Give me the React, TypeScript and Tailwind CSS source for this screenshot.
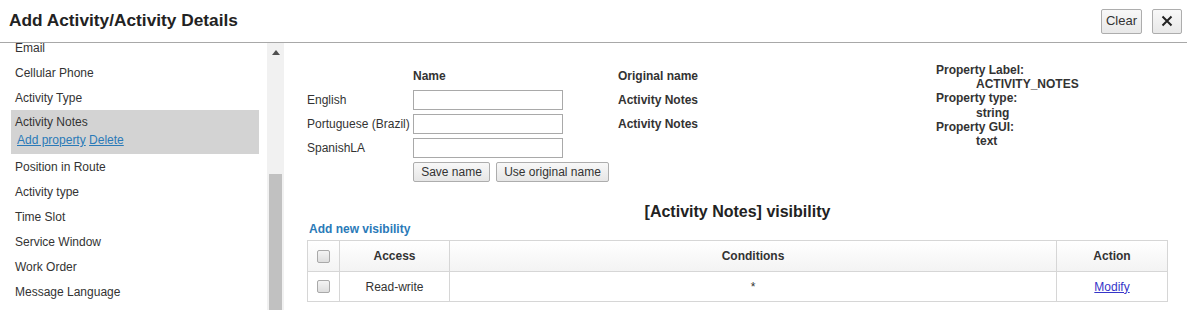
import React from "react";

const ITEMS_BEFORE = ["Email", "Cellular Phone", "Activity Type"];
const ITEMS_AFTER = ["Position in Route", "Activity type", "Time Slot", "Service Window", "Work Order", "Message Language"];
const LANGS = ["English", "Portuguese (Brazil)", "SpanishLA"];
const ORIGINAL: Record<string, string> = { English: "Activity Notes", "Portuguese (Brazil)": "Activity Notes" };

function Checkbox() {
  return <span className="block w-[13px] h-[13px] rounded-[2px] border border-[#a9a9a9] bg-gradient-to-b from-[#f4f4f4] to-[#dedede]" />;
}

export default function App() {
  return (
    <div className="w-[1187px] h-[310px] overflow-hidden bg-white text-[#333] font-['Liberation_Sans',Arial,sans-serif]">
      {/* Header */}
      <div className="h-[43px] flex items-center justify-between border-b border-[#a8a8a8] pl-[9px] pr-[5px]">
        <h1 className="text-[17.3px] font-bold text-[#222] mb-[1px]">Add Activity/Activity Details</h1>
        <div className="flex items-center gap-[10px]">
          <button className="h-[25px] px-[4px] text-[13px] text-[#333] border border-[#adadad] rounded-[2px] bg-gradient-to-b from-[#f8f8f8] to-[#e8e8e8]">Clear</button>
          <button className="h-[25px] w-[30px] flex items-center justify-center border border-[#adadad] rounded-[2px] bg-gradient-to-b from-[#f8f8f8] to-[#e8e8e8]">
            <svg width="12" height="12" viewBox="0 0 12 12"><path d="M1.5 1.5L10.5 10.5M10.5 1.5L1.5 10.5" stroke="#222" strokeWidth="2" /></svg>
          </button>
        </div>
      </div>

      <div className="flex h-[267px]">
        {/* Left list, scrolled a little */}
        <div className="w-[267px] overflow-hidden">
          <div className="mt-[-8px] pl-[11px] pr-[8px] text-[12px]">
            {ITEMS_BEFORE.map((it) => (
              <div key={it} className="h-[25px] flex items-center pl-[4px]">{it}</div>
            ))}
            <div className="h-[44px] bg-[#d3d3d3] pl-[4px] pt-[5px]">
              <div className="leading-[14px]">Activity Notes</div>
              <div className="mt-[4px] pl-[2px] leading-[14px] text-[#2a7ab8]">
                <a className="underline">Add property</a> <a className="underline">Delete</a>
              </div>
            </div>
            {ITEMS_AFTER.map((it) => (
              <div key={it} className="h-[25px] flex items-center pl-[4px]">{it}</div>
            ))}
          </div>
        </div>

        {/* Scrollbar */}
        <div className="w-[17px] bg-[#f1f1f1] flex flex-col items-center">
          <svg width="8" height="5" viewBox="0 0 8 5" className="mt-[7px]"><path d="M0 5L4 0L8 5Z" fill="#505050" /></svg>
          <div className="mt-[119px] w-[13px] flex-1 bg-[#c1c1c1]" />
        </div>

        {/* Right content */}
        <div className="flex-1 pl-[23px] pr-[19px]">
          <div className="flex">
            <div className="w-[629px] pt-[21px] grid grid-cols-[106px_205px_1fr] text-[12px] auto-rows-[24px] items-center">
              <div />
              <div className="font-bold">Name</div>
              <div className="font-bold">Original name</div>
              {LANGS.map((l) => (
                <React.Fragment key={l}>
                  <div>{l}</div>
                  <div><input className="block w-[150px] h-[20px] border border-[#a9a9a9] bg-white" /></div>
                  <div className="font-bold">{ORIGINAL[l] ?? ""}</div>
                </React.Fragment>
              ))}
              <div />
              <div className="col-span-2 flex gap-[6px]">
                <button className="h-[20px] w-[77px] text-[12px] border border-[#adadad] rounded-[2px] bg-gradient-to-b from-[#f8f8f8] to-[#e6e6e6]">Save name</button>
                <button className="h-[20px] w-[113px] text-[12px] border border-[#adadad] rounded-[2px] bg-gradient-to-b from-[#f8f8f8] to-[#e6e6e6]">Use original name</button>
              </div>
            </div>
            <div className="text-[12px] font-bold leading-[14.2px] pt-[20px]">
              <div>Property Label:</div>
              <div className="pl-[40px]">ACTIVITY_NOTES</div>
              <div>Property type:</div>
              <div className="pl-[40px]">string</div>
              <div>Property GUI:</div>
              <div className="pl-[40px]">text</div>
            </div>
          </div>

          <h2 className="mt-[18px] text-center text-[16px] font-bold text-[#222] leading-[20px]">[Activity Notes] visibility</h2>
          <div className="pl-[2px] text-[12px] font-bold text-[#2a7ab8] leading-[14px]">Add new visibility</div>

          <table className="mt-[4px] w-full border-collapse text-[12px]">
            <thead>
              <tr className="h-[31px] bg-gradient-to-b from-white to-[#f3f3f3]">
                <th className="w-[32px] border border-[#d6d6d6]"><div className="flex justify-center"><Checkbox /></div></th>
                <th className="w-[110px] border border-[#d6d6d6] font-bold">Access</th>
                <th className="border border-[#d6d6d6] font-bold">Conditions</th>
                <th className="w-[111px] border border-[#d6d6d6] font-bold">Action</th>
              </tr>
            </thead>
            <tbody>
              <tr className="h-[30px]">
                <td className="border border-[#d6d6d6]"><div className="flex justify-center"><Checkbox /></div></td>
                <td className="border border-[#d6d6d6] text-center">Read-write</td>
                <td className="border border-[#d6d6d6] text-center">*</td>
                <td className="border border-[#d6d6d6] text-center"><a className="underline text-[#3535c8]">Modify</a></td>
              </tr>
            </tbody>
          </table>
        </div>
      </div>
    </div>
  );
}
